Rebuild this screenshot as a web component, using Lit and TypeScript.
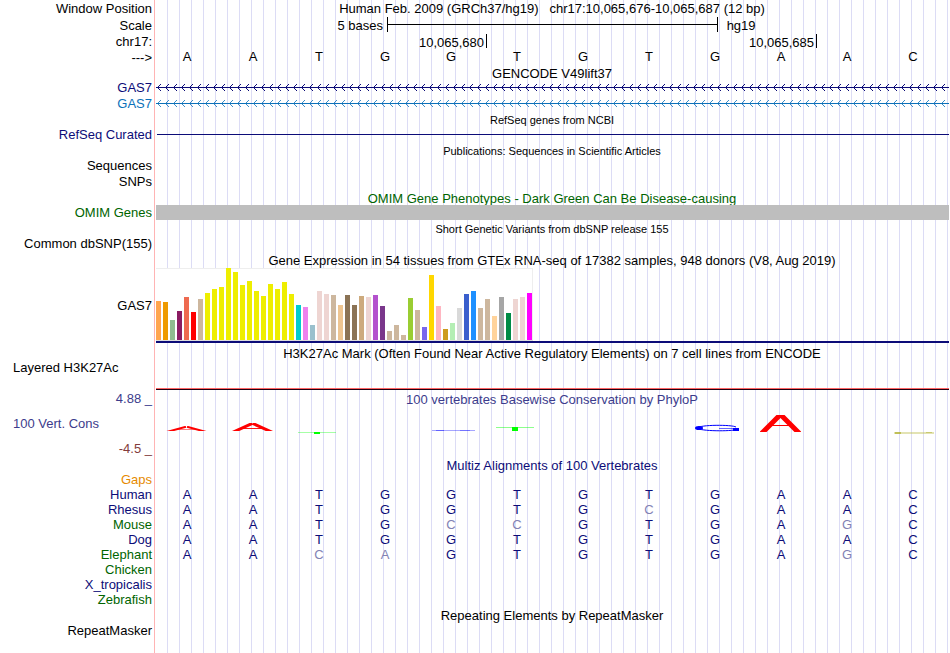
import { LitElement, html, css, svg } from "lit";
import { customElement } from "lit/decorators.js";
import { classMap } from "lit/directives/class-map.js";
import { styleMap } from "lit/directives/style-map.js";

const BASES = "AATGGTGTGAAC";

// Bar colour and height in pixels for each of the 54 GTEx tissues.
const TISSUES: [string, number][] = [
  ["#ffa54f", 39], ["#ee9a00", 38], ["#8fbc8f", 20], ["#8b1c62", 29], ["#ee6a50", 43], ["#ff0000", 28],
  ["#cdb79e", 41], ["#eeee00", 47], ["#eeee00", 51], ["#eeee00", 53], ["#eeee00", 72], ["#eeee00", 68],
  ["#eeee00", 55], ["#eeee00", 59], ["#eeee00", 49], ["#eeee00", 44], ["#eeee00", 56], ["#eeee00", 51],
  ["#eeee00", 58], ["#eeee00", 46], ["#00cdcd", 35], ["#ee82ee", 33], ["#9ac0cd", 15], ["#eed5d2", 49],
  ["#eed5d2", 46], ["#cdb79e", 45], ["#eec591", 35], ["#8b7355", 45], ["#8b7355", 35], ["#cdaa7d", 44],
  ["#eed5d2", 43], ["#b452cd", 45], ["#7a378b", 34], ["#cdb79e", 9], ["#cdb79e", 15], ["#cdb79e", 5],
  ["#9acd32", 42], ["#cdb79e", 30], ["#7a67ee", 13], ["#ffd700", 65], ["#ffb6c1", 34], ["#cd9b1d", 11],
  ["#b4eeb4", 17], ["#d9d9d9", 32], ["#3a5fcd", 46], ["#1e90ff", 49], ["#cdb79e", 32], ["#cdb79e", 41],
  ["#ffd39b", 24], ["#a6a6a6", 43], ["#008b45", 27], ["#eed5d2", 41], ["#eed5d2", 43], ["#ff00ff", 47],
];

// Lower-case letters differ from the human base and are drawn dimmed.
const SPECIES: { name: string; tone: string; bases: string }[] = [
  { name: "Gaps", tone: "orange", bases: "" },
  { name: "Human", tone: "navy", bases: "AATGGTGTGAAC" },
  { name: "Rhesus", tone: "navy", bases: "AATGGTGcGAAC" },
  { name: "Mouse", tone: "green", bases: "AATGccGTGAgC" },
  { name: "Dog", tone: "navy", bases: "AATGGTGTGAAC" },
  { name: "Elephant", tone: "green", bases: "AAcaGTGTGAgC" },
  { name: "Chicken", tone: "green", bases: "" },
  { name: "X_tropicalis", tone: "navy", bases: "" },
  { name: "Zebrafish", tone: "green", bases: "" },
];

const peak = (top: number, height: number, thick: number, bar: number) => svg`
  <svg x="12" y=${top} width="41" height=${height}>
    <g stroke="#ff0000" stroke-width=${thick} stroke-linecap="square">
      <line x1="-14" y1=${height * 2} x2="19" y2="1"></line>
      <line x1="55" y1=${height * 2} x2="22" y2="1"></line>
    </g>
    <rect x="11" y=${Math.round(height * 0.6)} width="19" height="1" fill="#ff0000" opacity=${bar}></rect>
  </svg>`;

const post = (top: number, height: number, fade: number) => svg`
  <rect x="12" y=${top} width="38" height="1" fill="#00ff00" opacity=${fade}></rect>
  <rect x="28" y=${top} width="6" height=${height} fill="#00ff00"></rect>`;

// Conservation marks, one drawing per base, 66 units wide.
const MARKS = [
  peak(19, 5, 2, 0.5),
  peak(16, 8, 3, 0.9),
  post(25, 2, 0.35),
  null,
  svg`<rect x="14" y="23" width="43" height="1" fill="#0000ff" opacity="0.35"></rect>
      <rect x="18" y="23" width="8" height="1" fill="#0000ff" opacity="0.4"></rect>
      <rect x="42" y="23" width="10" height="1" fill="#0000ff" opacity="0.3"></rect>`,
  post(20, 4, 0.45),
  null,
  null,
  svg`<path d="M54 20 C50 17.6 18 17.6 15 21 C18 24.4 50 24.4 54 22.5" fill="none" stroke="#0000ff" stroke-width="1"></path>
      <ellipse cx="17" cy="21" rx="4" ry="2" fill="#0000ff"></ellipse>
      <rect x="37" y="21" width="20" height="1" fill="#0000ff" opacity="0.6"></rect>
      <rect x="51" y="21" width="6" height="3" fill="#0000ff"></rect>`,
  peak(8, 17, 5, 1),
  null,
  svg`<rect x="14" y="25" width="40" height="2" fill="#b8b840" opacity="0.4"></rect>
      <rect x="15" y="25" width="6" height="2" fill="#b0b030" opacity="0.7"></rect>
      <rect x="46" y="25" width="6" height="1" fill="#b0b030" opacity="0.5"></rect>`,
];

@customElement("app-root")
export class AppRoot extends LitElement {
  static styles = css`
    :host {
      display: block;
      font: 13px/16px "Liberation Sans", Arial, sans-serif;
      color: #000;
    }
    .browser {
      min-height: 100vh;
      background:
        linear-gradient(#ffb4b4, #ffb4b4) 154px 0 / 1px 100% no-repeat,
        linear-gradient(#fff, #fff) 0 0 / 166px 100% no-repeat,
        linear-gradient(to right, #dcdcf5 1px, transparent 1px) 167px 0 / 12px 100% repeat-x;
    }
    .row {
      display: grid;
      grid-template-columns: 154px minmax(0, 1fr);
      line-height: 16px;
      height: 16px;
      white-space: pre;
    }
    .h15 { height: 15px; line-height: 15px; }
    .h17 { height: 17px; line-height: 17px; }
    .h18 { height: 18px; line-height: 19px; }
    .label { text-align: right; padding-right: 2px; }
    .label.left { text-align: left; padding-left: 13px; }
    .title { text-align: center; font: inherit; margin: 0; padding-top: 1px; }
    .title.small { font-size: 11px; }
    .navy { color: #0c0c78; }
    .blue { color: #0c71b9; }
    .green { color: #006400; }
    .orange { color: #e68a00; }
    .slate { color: #3c3c8c; }
    .maroon { color: #823c3c; }

    .position { line-height: 17px; padding: 0; }
    .scale { display: grid; grid-template-columns: 353fr 501fr 346fr; padding-right: 4px; }
    .scale .from { text-align: right; padding-right: 4px; }
    .scale .to { padding-left: 9px; }
    .ruler { display: flex; align-items: center; height: 15px; border: solid #000; border-width: 0 1px; }
    .ruler::before { content: ""; flex: 1; height: 1px; background: #000; }
    .ticks { display: grid; grid-template-columns: 5fr 5fr 2fr; padding: 0 1px 0 3px; }
    .tick { text-align: right; padding-right: 2px; border-right: 1px solid #000; line-height: 17px; height: 14px; }

    .bases { display: grid; grid-template-columns: repeat(12, minmax(0, 1fr)); padding-right: 4px; text-align: center; line-height: 14px; }
    .wide { margin: 0 1px 0 2px; }
    .arrows { display: block; width: 100%; height: 15px; }
    .line { height: 1px; background: #0c0c78; margin: 7px 1px 0 3px; }
    .bar { height: 15px; background: #bebebe; }

    .gtex { display: grid; grid-template-columns: 154px minmax(0, 1fr); align-items: center; line-height: 18px; }
    .plot { border-bottom: 2px solid #0c0c78; }
    .tissues {
      display: flex;
      gap: 2px;
      align-items: flex-end;
      width: max-content;
      height: 72px;
      padding-right: 1px;
      background: #fff;
      box-shadow: inset -1px 1px #eee;
      border-bottom: 1px solid #ddd;
    }
    .tissue { width: 5px; }

    .signal { height: 29px; line-height: 13px; }
    .signal .base { align-self: end; height: 1px; background: #200010; border-top: 1px solid #ff6464; }
    .cons { height: 34px; line-height: 34px; }
    .mark { display: block; width: 66px; height: 34px; }

    table { width: calc(100% - 4px); table-layout: fixed; border-collapse: collapse; line-height: 15px; }
    .name { width: 152px; padding: 0 2px 0 0; text-align: right; font-weight: normal; }
    td { padding: 0; text-align: center; color: #0c0c78; }
    td.differs { color: #8282b4; }
  `;

  private heading(text: string, size = "", tone = "", small = false) {
    return html`<div class="row ${size}">
      <span></span>
      <h2 class=${classMap({ title: true, small, [tone || "plain"]: true })}>${text}</h2>
    </div>`;
  }

  private arrows(id: string, color: string, opacity: number) {
    return html`<svg class="arrows" aria-hidden="true" shape-rendering="crispEdges">
      <defs>
        <pattern id=${id} width="8" height="15" patternUnits="userSpaceOnUse">
          <g fill=${color} opacity=${opacity}>
            <rect x="2" y="6" width="1" height="1"></rect><rect x="2" y="8" width="1" height="1"></rect>
            <rect x="3" y="5" width="1" height="1"></rect><rect x="3" y="9" width="1" height="1"></rect>
            <rect x="4" y="4" width="1" height="1"></rect><rect x="4" y="10" width="1" height="1"></rect>
          </g>
          <rect x="0" y="7" width="8" height="1" fill=${color}></rect>
        </pattern>
      </defs>
      <rect width="100%" height="15" fill="url(#${id})"></rect>
    </svg>`;
  }

  render() {
    return html`<main class="browser">
      <div class="row h17"><span class="label">Window Position</span><h1 class="title position">Human Feb. 2009 (GRCh37/hg19)   chr17:10,065,676-10,065,687 (12 bp)</h1></div>
      <div class="row h17"><span class="label">Scale</span><div class="scale"><span class="from">5 bases</span><span class="ruler"></span><span class="to">hg19</span></div></div>
      <div class="row"><span class="label">chr17:</span><div class="ticks"><span class="tick">10,065,680</span><span class="tick">10,065,685</span></div></div>
      <div class="row h15"><span class="label">---&gt;</span><div class="bases">${[...BASES].map((b) => html`<span>${b}</span>`)}</div></div>

      ${this.heading("GENCODE V49lift37", "h15")}
      <div class="row"><span class="label navy">GAS7</span><div class="wide">${this.arrows("gas-a", "#0c0c78", 1)}</div></div>
      <div class="row"><span class="label blue">GAS7</span><div class="wide">${this.arrows("gas-b", "#0c71b9", 0.8)}</div></div>
      ${this.heading("RefSeq genes from NCBI", "h15", "", true)}
      <div class="row h15"><span class="label navy">RefSeq Curated</span><div class="line"></div></div>
      ${this.heading("Publications: Sequences in Scientific Articles", "", "", true)}
      <div class="row"><span class="label">Sequences</span></div>
      <div class="row"><span class="label">SNPs</span></div>
      ${this.heading("OMIM Gene Phenotypes - Dark Green Can Be Disease-causing", "h15", "green")}
      <div class="row h15"><span class="label green">OMIM Genes</span><div class="wide bar"></div></div>
      ${this.heading("Short Genetic Variants from dbSNP release 155", "", "", true)}
      <div class="row"><span class="label">Common dbSNP(155)</span></div>
      ${this.heading("Gene Expression in 54 tissues from GTEx RNA-seq of 17382 samples, 948 donors (V8, Aug 2019)")}
      <div class="gtex">
        <span class="label">GAS7</span>
        <div class="wide plot"><div class="tissues">
          ${TISSUES.map(([background, h]) => html`<div class="tissue" style=${styleMap({ background, height: `${h}px` })}></div>`)}
        </div></div>
      </div>
      ${this.heading("H3K27Ac Mark (Often Found Near Active Regulatory Elements) on 7 cell lines from ENCODE", "h18")}
      <div class="row signal"><span class="label left">Layered H3K27Ac</span><div class="wide base"></div></div>
      <div class="row h17"><span class="label slate">4.88 _</span><h2 class="title slate">100 vertebrates Basewise Conservation by PhyloP</h2></div>
      <div class="row cons">
        <span class="label left slate">100 Vert. Cons</span>
        <div class="bases">${MARKS.map((m) => html`<svg class="mark" viewBox="0 0 66 34" aria-hidden="true">${m}</svg>`)}</div>
      </div>
      <div class="row"><span class="label maroon">-4.5 _</span></div>
      ${this.heading("Multiz Alignments of 100 Vertebrates", "h15", "navy")}
      <table>
        ${SPECIES.map((s) => html`<tr>
          <th scope="row" class="name ${s.tone}">${s.name}</th>
          ${Array.from({ length: 12 }, (_, i) => {
            const b = s.bases[i] ?? "";
            return html`<td class=${classMap({ differs: b !== b.toUpperCase() })}>${b.toUpperCase()}</td>`;
          })}
        </tr>`)}
      </table>
      ${this.heading("Repeating Elements by RepeatMasker")}
      <div class="row h15"><span class="label">RepeatMasker</span></div>
    </main>`;
  }
}
